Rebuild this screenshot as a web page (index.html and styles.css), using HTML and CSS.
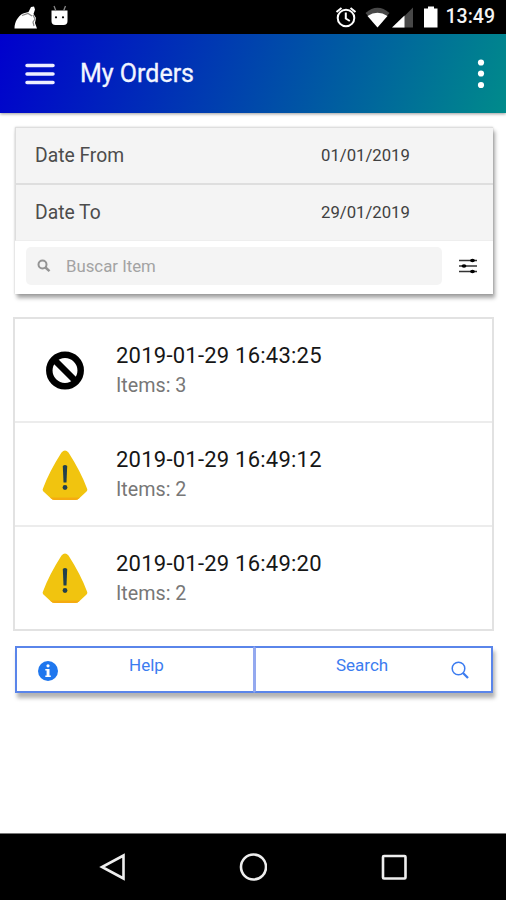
FILE: index.html
```html
<!DOCTYPE html>
<html lang="en">
<head>
<meta charset="utf-8">
<title>My Orders</title>
<link rel="stylesheet" href="styles.css">
</head>
<body>
<div class="screen">
  <div class="status">
    <svg class="status-left" width="60" height="34" viewBox="0 0 60 34">
      <path fill="#fff" d="M.5 28.500C.5 22 4 16 9 13.500L14.500 12l2.500-5 3-.5 1 3-1.500 4.500L22 18l-1 5 2 5.500z"/>
      <path fill="none" stroke="#888" stroke-width="1.200" d="M8 15.500l6-2 4 2.500M19 15l2 4-2 3 1 4"/>
      <path fill="#fff" d="M37.500 10.500h16v10.500a4 4 0 0 1-4 4h-8a4 4 0 0 1-4-4z"/>
      <path stroke="#888" stroke-width="1.300" d="M42 11l-2-5M49.500 11l2-5"/>
      <circle cx="42" cy="17.300" r="1.100"/><circle cx="49" cy="17.300" r="1.100"/>
    </svg>
    <div class="status-right">
      <svg width="106" height="34" viewBox="0 0 106 34">
        <g fill="none" stroke="#fff" stroke-width="2"><circle cx="11" cy="18" r="8.300"/><path d="M10.800 12.500v6l4 2.500M1.500 12l5-4M15.500 8l5 4"/></g>
        <path fill="#484848" d="M30.500 13Q42.500 2.500 54.500 13L42.500 27z"/><path fill="#fff" d="M32.500 16Q42.500 9.500 52.500 16L42.500 27.500z"/>
        <path fill="#484848" d="M78 7.500v20H58z"/><path fill="#fff" d="M69.500 15.500v12H57z"/>
        <path fill="#fff" d="M89 8.500h4V6.500h6v2h3.500v19H89z"/>
      </svg>
      <span class="clock">13:49</span>
    </div>
  </div>
  <header class="bar">
    <svg class="menu" width="30" height="22" viewBox="0 0 30 22"><path stroke="#eef" stroke-width="3.500" stroke-linecap="round" d="M2 2.500h26M2 11h26M2 19.500h26"/></svg>
    <h1 class="title">My Orders</h1>
    <svg class="more" width="8" height="32" viewBox="0 0 8 32" fill="#fff"><circle cx="4" cy="4.500" r="3.100"/><circle cx="4" cy="15.500" r="3.100"/><circle cx="4" cy="27" r="3.100"/></svg>
  </header>
  <main class="content">
    <section class="filters">
      <div class="date-row"><span class="date-label from">Date From</span><span class="date-value">01/01/2019</span></div>
      <div class="date-row"><span class="date-label to">Date To</span><span class="date-value">29/01/2019</span></div>
      <div class="search-row">
        <div class="search-box">
          <svg width="14" height="14" viewBox="0 0 14 14" fill="none" stroke="#949494" stroke-width="2"><circle cx="5.500" cy="5.500" r="4"/><path d="M8.500 8.500l4 3.700" stroke-width="2.500"/></svg>
          <span class="placeholder">Buscar Item</span>
        </div>
        <svg class="tune" width="20" height="16" viewBox="0 0 20 16"><path stroke="#333" stroke-width="1.400" d="M1 2.500h18M1 8h18M1 13.500h18"/><g fill="#000"><ellipse cx="14.500" cy="2.500" rx="2.400" ry="1.700"/><ellipse cx="6" cy="8" rx="2.400" ry="1.700"/><ellipse cx="14.500" cy="13.500" rx="2.400" ry="1.700"/></g></svg>
      </div>
    </section>
    <section class="orders">
      <article class="order">
        <svg class="order-icon" width="48" height="52" viewBox="0 0 48 52" fill="none" stroke="#000" stroke-width="6.500"><circle cx="24" cy="25.500" r="15.700"/><path d="M13 14.500l22 22"/></svg>
        <div><div class="order-date">2019-01-29 16:43:25</div><div class="order-items">Items: 3</div></div>
      </article>
      <article class="order">
        <svg class="order-icon" width="48" height="52" viewBox="0 0 48 52"><path fill="#f1c40f" d="M20.500 3.500Q24-.5 27.500 3.500Q40 23 46 39.500Q47 41.500 45 43L38 49.500Q36.500 51 34 51H14Q11.500 51 10 49.500L3 43Q1 41.500 2 39.500Q8 23 20.500 3.500z"/><path fill="#f5ab10" d="M9 48.500h30Q36.500 51 34 51H14Q11.500 51 9 48.500z"/><path fill="#22404c" d="M21.800 17q2.200-2 4.400 0l-.7 16.500h-3z"/><circle cx="24" cy="38.500" r="2.400" fill="#22404c"/></svg>
        <div><div class="order-date">2019-01-29 16:49:12</div><div class="order-items">Items: 2</div></div>
      </article>
      <article class="order">
        <svg class="order-icon" width="48" height="52" viewBox="0 0 48 52"><path fill="#f1c40f" d="M20.500 3.500Q24-.5 27.500 3.500Q40 23 46 39.500Q47 41.500 45 43L38 49.500Q36.500 51 34 51H14Q11.500 51 10 49.500L3 43Q1 41.500 2 39.500Q8 23 20.500 3.500z"/><path fill="#f5ab10" d="M9 48.500h30Q36.500 51 34 51H14Q11.500 51 9 48.500z"/><path fill="#22404c" d="M21.800 17q2.200-2 4.400 0l-.7 16.500h-3z"/><circle cx="24" cy="38.500" r="2.400" fill="#22404c"/></svg>
        <div><div class="order-date">2019-01-29 16:49:20</div><div class="order-items">Items: 2</div></div>
      </article>
    </section>
    <section class="actions">
      <div class="action help">
        <svg width="20" height="20" viewBox="0 0 20 20"><circle cx="10" cy="10" r="10" fill="#1f77ee"/><circle cx="10" cy="4.800" r="1.600" fill="#fff"/><path fill="#fff" d="M7.300 8h4.200v6.500h1.300V16H7.300v-1.500h1.300v-5H7.300z"/></svg>
        <span class="help-label">Help</span>
      </div>
      <div class="action search">
        <span class="search-label">Search</span>
        <svg width="18" height="18" viewBox="0 0 18 18" fill="none" stroke="#3c7cf0" stroke-width="1.500"><circle cx="7.500" cy="7.500" r="6.300"/><path stroke-width="2.300" d="M12 12l5 5"/></svg>
      </div>
    </section>
  </main>
  <nav class="nav">
    <svg width="28" height="30" viewBox="0 0 28 30" fill="none" stroke="#eee" stroke-width="2.600"><path d="M25.500 3.500v23L4 15z"/></svg>
    <svg width="28" height="30" viewBox="0 0 28 30" fill="none" stroke="#eee" stroke-width="2.600"><circle cx="14.500" cy="15" r="12.500"/></svg>
    <svg width="28" height="30" viewBox="0 0 28 30" fill="none" stroke="#eee" stroke-width="2.600"><rect x="3" y="4" width="22.500" height="22.500" rx="1"/></svg>
  </nav>
</div>
</body>
</html>
```
FILE: styles.css
```css
* { box-sizing: border-box; }
body { margin: 0; font-family: Roboto, sans-serif; background: #fff; }
svg { display: block; flex: none; }
span, .order-date, .order-items, .title { white-space: nowrap; }
.screen { width: 506px; height: 900px; display: flex; flex-direction: column; overflow: hidden; }
.status { height: 34px; flex: none; background: #000; display: flex; justify-content: space-between; padding: 0 11px 0 14px; }
.status-right { display: flex; }
.clock { color: #f4f4f4; font-size: 19.5px; font-weight: 500; line-height: 34px; width: 54px; text-align: right; }
.bar { height: 79px; flex: none; display: flex; align-items: center; padding: 0 21px 0 25px; background: linear-gradient(110deg, #0000cd 0%, #008b8b 100%); box-shadow: 0 1px 3px rgba(0,0,0,.4); }
.title { margin: 0 auto 0 25px; color: #f2f5ff; font-size: 25px; font-weight: 400; -webkit-text-stroke: .3px #f2f5ff; }
.content { flex: 1; padding: 14px 12px 0 13px; }
.filters { margin: 0 1px 0 2px; height: 167px; box-shadow: 2px 4px 4px rgba(0,0,0,.35), 0 0 2px rgba(0,0,0,.18); border-top: 1px solid #dedede; }
.date-row { height: 57px; background: #f4f4f4; display: flex; align-items: center; padding-left: 19px; border-left: 1px solid #ddd; border-bottom: 2px solid #dedede; }
.date-row + .date-row { height: 56px; border-bottom: 1px solid #eee; padding-bottom: 1px; }
.date-label { width: 286px; color: #4c4c4c; font-size: 19.3px; }
.date-value { color: #404040; font-size: 16.7px; }
.search-row { height: 53px; display: flex; align-items: center; padding: 0 15px 4px 11px; justify-content: space-between; }
.search-box { width: 416px; height: 38px; border-radius: 5px; background: #f4f4f4; display: flex; align-items: center; padding-left: 11px; gap: 15px; }
.placeholder { color: #a3a3a3; font-size: 16.8px; }
.orders { margin-top: 23px; height: 314px; border: 2px solid #e2e2e2; }
.order { height: 104px; display: flex; align-items: center; padding: 1px 0 0 26px; gap: 27px; border-bottom: 2px solid #ececec; }
.order:last-child { border: 0; padding: 0 0 2px 26px; }
.order-date { color: #161616; font-size: 22px; line-height: 30px; letter-spacing: .23px; }
.order-items { color: #777; font-size: 19.7px; line-height: 29px; }
.actions { margin: 15px 0 0 2px; width: 478px; height: 47px; display: flex; box-shadow: 2px 5px 4px rgba(0,0,0,.3); }
.action { border: 2px solid #5a85ea; flex: 0 0 239px; display: flex; color: #3c7cf0; font-size: 17px; line-height: 20px; }
.help { border-right: 1px solid #94a9ef; padding: 13px 0 0 21px; }
.search { border-left: 2px solid #94a9ef; padding: 13px 0 0 80px; }
.help-label { margin: -6px 0 0 71px; }
.search-label { margin: -6px 63px 0 0; }
.nav { height: 67px; flex: none; background: #000; border-top: 1px solid #777; display: flex; justify-content: space-between; align-items: center; padding: 0 98px 0 98px; }
```
